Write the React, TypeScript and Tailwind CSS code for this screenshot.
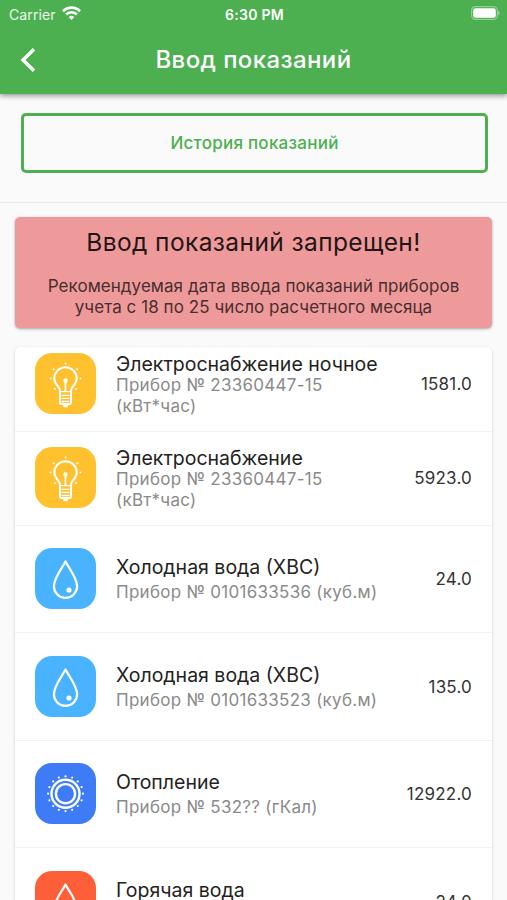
import type { ReactNode } from 'react';
import clsx from 'clsx';

type MeterKind = 'power' | 'cold' | 'heat' | 'hot';

interface Meter {
  id: number;
  kind: MeterKind;
  title: string;
  device?: string;
  unit?: string;
  value: string;
}

const meters: Meter[] = [
  { id: 1, kind: 'power', title: 'Электроснабжение ночное', device: '23360447-15', unit: 'кВт*час', value: '1581.0' },
  { id: 2, kind: 'power', title: 'Электроснабжение', device: '23360447-15', unit: 'кВт*час', value: '5923.0' },
  { id: 3, kind: 'cold', title: 'Холодная вода (ХВС)', device: '0101633536', unit: 'куб.м', value: '24.0' },
  { id: 4, kind: 'cold', title: 'Холодная вода (ХВС)', device: '0101633523', unit: 'куб.м', value: '135.0' },
  { id: 5, kind: 'heat', title: 'Отопление', device: '532??', unit: 'гКал', value: '12922.0' },
  { id: 6, kind: 'hot', title: 'Горячая вода', value: '24.0' },
];

const tileColors: Record<MeterKind, string> = {
  power: 'bg-[#ffc12d]',
  cold: 'bg-[#4ab3ff]',
  heat: 'bg-[#3d7bf7]',
  hot: 'bg-[#ff5f38]',
};

const BULB_RAYS = [180, 218, 270, 322, 0, 45, 135];

function dot(cx: number, cy: number, r: number, deg: number, size: number) {
  const a = (deg * Math.PI) / 180;
  return <circle key={deg} cx={cx + r * Math.cos(a)} cy={cy + r * Math.sin(a)} r={size} fill="white" stroke="none" />;
}

function BulbIcon() {
  return (
    <>
      <path d="M25 39v-1.500c0-3.500-5.700-6-5.700-12a11.200 11.200 0 0 1 22.400 0c0 6-5.700 8.500-5.700 12V39" strokeWidth="2.100" />
      <path d="M30.500 38V28" strokeWidth="1.800" />
      <circle cx="30.500" cy="27.500" r="2.200" fill="white" stroke="none" />
      <path d="M25 38v11.500q0 1.500 1.500 1.500h8q1.500 0 1.500-1.500V38" strokeWidth="2" />
      <path d="M25 38.700h11M26.500 42.300h8M26.500 45.400h8M26.500 48.500h8" strokeWidth="1.300" />
      <path d="M27.300 51h6.400l-1.300 3.200h-3.800z" fill="white" stroke="none" />
      {BULB_RAYS.map((deg) => dot(30.5, 25.5, 15, deg, 1))}
    </>
  );
}

function DropIcon() {
  return (
    <>
      <path d="M30.500 13.500C27 20.500 18.900 30 18.900 38.300a11.600 11.600 0 0 0 23.200 0C42.100 30 34 20.500 30.500 13.500z" strokeWidth="2.200" />
      <circle cx="34" cy="42" r="2.600" fill="white" stroke="none" />
    </>
  );
}

function HeatIcon() {
  return (
    <>
      <circle cx="30.500" cy="30.700" r="14" strokeWidth="2.400" />
      <circle cx="30.500" cy="30.700" r="9.600" strokeWidth="2.400" />
      {Array.from({ length: 16 }, (_, i) => dot(30.5, 30.7, 17.4, i * 22.5, 1.1))}
    </>
  );
}

const glyphs: Record<MeterKind, ReactNode> = {
  power: <BulbIcon />,
  cold: <DropIcon />,
  heat: <HeatIcon />,
  hot: <DropIcon />,
};

function MeterRow({ meter, first }: { meter: Meter; first: boolean }) {
  const isPower = meter.kind === 'power';
  return (
    <li
      className={clsx(
        'flex shrink-0 items-center border-b border-[#f2f2f2] px-5',
        isPower ? 'h-[94px]' : 'h-[107.5px]',
        // the list is scrolled a little under its top edge
        first && '-mt-[9.5px]'
      )}
    >
      <div className={clsx('size-[61px] shrink-0 rounded-[17px]', isPower && 'mb-[2px]', tileColors[meter.kind])}>
        <svg viewBox="0 0 61 61" fill="none" stroke="white" strokeLinejoin="round" className="size-full">
          {glyphs[meter.kind]}
        </svg>
      </div>
      <div className={clsx('ml-5 flex-1', isPower ? 'pt-[2px]' : 'pt-[3px]')}>
        <h3 className={clsx('text-[19.5px] whitespace-nowrap text-[#222]', isPower ? 'leading-[22px]' : 'leading-[24px]')}>
          {meter.title}
        </h3>
        <p
          className={clsx(
            'text-[17px] tracking-[0.27px] text-[#8a8a8a]',
            isPower ? 'leading-[21px]' : 'min-h-[26px] leading-[26px] whitespace-nowrap'
          )}
        >
          {meter.device && (
            <>
              Прибор № {meter.device} {isPower && <br />}({meter.unit})
            </>
          )}
        </p>
      </div>
      <span className="pt-[2px] text-[17px] tracking-[0.2px] text-[#333]">{meter.value}</span>
    </li>
  );
}

function StatusBar() {
  return (
    <div className="grid h-[27px] grid-cols-3 items-center pt-px pr-[7px] pl-[9px] text-[14px]">
      <div className="flex items-center gap-1.5 text-white/90">
        <span className="tracking-[0.1px]">Carrier</span>
        <svg viewBox="0 0 19 14" className="mb-[3px] h-3.5 w-[19px]" fill="none" stroke="white" strokeWidth="2.700">
          <path d="M1 5.200a12 12 0 0 1 17 0" />
          <path d="M4.100 8.500a7.600 7.600 0 0 1 10.800 0" />
          <path d="M9.500 14l-2.800-3a3.900 3.900 0 0 1 5.600 0z" fill="white" stroke="none" />
        </svg>
      </div>
      <span className="text-center font-semibold tracking-[0.3px] whitespace-nowrap">6:30 PM</span>
      <svg viewBox="0 0 29 14" className="mb-[2px] h-3.5 w-[29px] justify-self-end" fill="none">
        <rect x="0.600" y="0.600" width="25.800" height="12.800" rx="3.800" stroke="white" strokeOpacity="0.400" strokeWidth="1.200" />
        <rect x="2.200" y="2.200" width="22.600" height="9.600" rx="2.200" fill="white" />
        <path d="M27.400 4.800q1.400.7 1.400 2.200t-1.400 2.200z" fill="white" fillOpacity="0.500" />
      </svg>
    </div>
  );
}

export default function App() {
  return (
    <div className="flex h-[900px] w-full flex-col overflow-hidden bg-[#fafafa] font-['Inter','Noto_Sans',sans-serif]">
      <header className="h-[94px] shrink-0 bg-[#4caf50] text-white shadow-[0_2px_5px_rgba(0,0,0,0.4)]">
        <StatusBar />
        <div className="grid h-[66px] grid-cols-[60px_1fr_60px] items-center">
          <button className="pl-5" aria-label="Назад">
            <svg viewBox="0 0 16 24" className="h-6 w-4" fill="none" stroke="white" strokeWidth="3.400">
              <path d="M14 1.200L3 12l11 10.800" />
            </svg>
          </button>
          <h1 className="text-center text-[24px] font-medium tracking-[0.4px]">Ввод показаний</h1>
        </div>
      </header>

      <section className="shrink-0 border-b border-[#ececec] pt-[19px] pr-[19px] pb-[29px] pl-[21px]">
        <button className="h-[60px] w-full rounded-[5px] border-3 border-[#4caf50] pt-[2px] text-[17px] font-medium tracking-[0.25px] text-[#4caf50]">
          История показаний
        </button>
      </section>

      <section className="mx-[15px] mt-[14px] h-[111px] shrink-0 rounded-[5px] bg-[#ef9a9a] pt-[9px] text-center shadow-[0_1px_3px_rgba(0,0,0,0.35)]">
        <h2 className="text-[24.5px] leading-[32px] tracking-[0.4px] text-[#221515]">Ввод показаний запрещен!</h2>
        <p className="mt-[18px] text-[17px] leading-[21px] tracking-[0.06px] text-[#482e2e]">
          Рекомендуемая дата ввода показаний приборов
          <br />
          учета с 18 по 25 число расчетного месяца
        </p>
      </section>

      <ul className="mx-[15px] mt-[19px] flex min-h-0 flex-1 flex-col overflow-hidden rounded-t-[5px] bg-white shadow-[0_1px_3px_rgba(0,0,0,0.2)]">
        {meters.map((meter, i) => (
          <MeterRow key={meter.id} meter={meter} first={i === 0} />
        ))}
      </ul>
    </div>
  );
}
